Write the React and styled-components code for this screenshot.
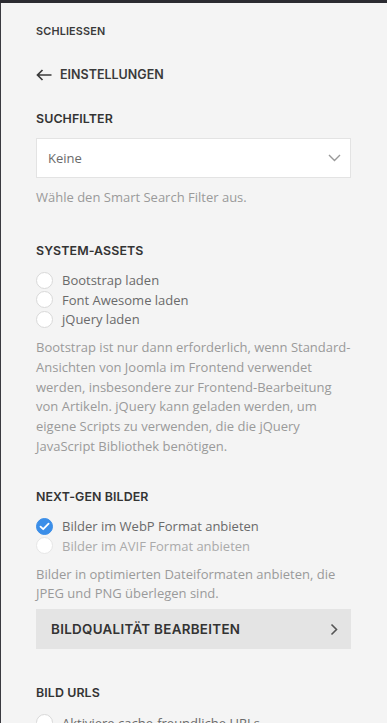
import React from "react";
import styled, { createGlobalStyle } from "styled-components";

const Global = createGlobalStyle`
  html, body { margin: 0; padding: 0; background: #f4f4f4; }
  body { font-family: "Open Sans", "Liberation Sans", sans-serif; -webkit-font-smoothing: antialiased; }
  * { box-sizing: border-box; }
`;

const Frame = styled.div`
  width: 387px;
  height: 723px;
  overflow: hidden;
  background: #2b2b31;
  padding-top: 3px;
  display: flex;
  flex-direction: column;
`;

const Panel = styled.div`
  flex: 1;
  background: #f4f4f4;
  border-left: 1px solid #3a3a40;
  padding: 21px 36px 0 35px;
  display: flex;
  flex-direction: column;
`;

const TopLink = styled.div`
  font-family: Inter, "Liberation Sans", sans-serif;
  font-size: 10.8px;
  font-weight: 600;
  letter-spacing: 0.2px;
  color: #3a3a3a;
  line-height: 16px;
`;

const BackRow = styled.div`
  display: flex;
  align-items: center;
  gap: 8px;
  margin-top: 27px;
  font-family: Inter, "Liberation Sans", sans-serif;
  font-size: 12.5px;
  font-weight: 600;
  color: #3a3a3a;
  line-height: 16px;
`;

const Section = styled.section`
  margin-top: ${(p) => p.$top}px;
  display: flex;
  flex-direction: column;
`;

const Heading = styled.h3`
  margin: 0;
  font-family: Inter, "Liberation Sans", sans-serif;
  font-size: 12.4px;
  font-weight: 600;
  letter-spacing: 0.1px;
  color: #333;
  line-height: 16px;
`;

const Select = styled.div`
  margin-top: 11px;
  height: 40px;
  background: #fff;
  border: 1px solid #e3e3e3;
  display: flex;
  align-items: center;
  justify-content: space-between;
  padding: 0 9px 0 11px;
  font-size: 13px;
  color: #6a6a6a;
`;

const Help = styled.p`
  margin: ${(p) => p.$top || 0}px 0 0;
  font-size: 13px;
  line-height: 19.8px;
  color: #9a9a9a;
`;

const OptionList = styled.div`
  margin-top: 12px;
  display: flex;
  flex-direction: column;
`;

const Option = styled.label`
  display: flex;
  align-items: center;
  gap: 9px;
  height: 19.4px;
  font-size: 13px;
  color: ${(p) => (p.$disabled ? "#aaa" : "#6a6a6a")};
`;

const Circle = styled.span`
  width: 17px;
  height: 17px;
  border-radius: 50%;
  flex: none;
  display: flex;
  align-items: center;
  justify-content: center;
  background: ${(p) => (p.$checked ? "#3b8ee8" : "#fff")};
  border: 1px solid ${(p) => (p.$checked ? "#3b8ee8" : p.$disabled ? "#e6e6e6" : "#d9d9d9")};
`;

const ActionButton = styled.button`
  margin-top: 5px;
  height: 40px;
  border: none;
  background: #e4e4e4;
  display: flex;
  align-items: center;
  justify-content: space-between;
  padding: 0 13px 0 15px;
  font-family: Inter, "Liberation Sans", sans-serif;
  font-size: 13.4px;
  font-weight: 600;
  letter-spacing: 0.3px;
  color: #333;
  cursor: pointer;
`;

const Check = () => (
  <svg width="11" height="9" viewBox="0 0 11 9">
    <path d="M1.5 4.6 L4.2 7.2 L9.6 1.6" fill="none" stroke="#fff" strokeWidth="1.8" strokeLinecap="round" strokeLinejoin="round" />
  </svg>
);

const RadioOption = ({ children, checked, disabled }) => (
  <Option $disabled={disabled}>
    <Circle $checked={checked} $disabled={disabled}>{checked && <Check />}</Circle>
    {children}
  </Option>
);

export default function App() {
  return (
    <>
      <Global />
      <Frame>
        <Panel>
          <TopLink>SCHLIESSEN</TopLink>
          <BackRow>
            <svg width="16" height="12" viewBox="0 0 16 12">
              <path d="M15.5 6 H1.5 M6.5 1 L1.5 6 L6.5 11" fill="none" stroke="#3a3a3a" strokeWidth="1.7" />
            </svg>
            EINSTELLUNGEN
          </BackRow>

          <Section $top={28}>
            <Heading>SUCHFILTER</Heading>
            <Select>
              Keine
              <svg width="13" height="8" viewBox="0 0 13 8">
                <path d="M1 1 L6.5 6.5 L12 1" fill="none" stroke="#999" strokeWidth="1.4" />
              </svg>
            </Select>
            <Help $top={10}>Wähle den Smart Search Filter aus.</Help>
          </Section>

          <Section $top={35}>
            <Heading>SYSTEM-ASSETS</Heading>
            <OptionList>
              <RadioOption>Bootstrap laden</RadioOption>
              <RadioOption>Font Awesome laden</RadioOption>
              <RadioOption>jQuery laden</RadioOption>
            </OptionList>
            <Help $top={9}>
              Bootstrap ist nur dann erforderlich, wenn Standard-Ansichten von Joomla im Frontend verwendet werden, insbesondere zur Frontend-Bearbeitung von Artikeln. jQuery kann geladen werden, um eigene Scripts zu verwenden, die die jQuery JavaScript Bibliothek benötigen.
            </Help>
          </Section>

          <Section $top={32}>
            <Heading>NEXT-GEN BILDER</Heading>
            <OptionList>
              <RadioOption checked>Bilder im WebP Format anbieten</RadioOption>
              <RadioOption disabled>Bilder im AVIF Format anbieten</RadioOption>
            </OptionList>
            <Help $top={9}>Bilder in optimierten Dateiformaten anbieten, die JPEG und PNG überlegen sind.</Help>
            <ActionButton>
              BILDQUALITÄT BEARBEITEN
              <svg width="8" height="13" viewBox="0 0 8 13">
                <path d="M1.5 1.5 L6.5 6.5 L1.5 11.5" fill="none" stroke="#555" strokeWidth="1.6" />
              </svg>
            </ActionButton>
          </Section>

          <Section $top={36}>
            <Heading>BILD URLS</Heading>
            <OptionList>
              <RadioOption>Aktiviere cache-freundliche URLs</RadioOption>
            </OptionList>
          </Section>
        </Panel>
      </Frame>
    </>
  );
}
